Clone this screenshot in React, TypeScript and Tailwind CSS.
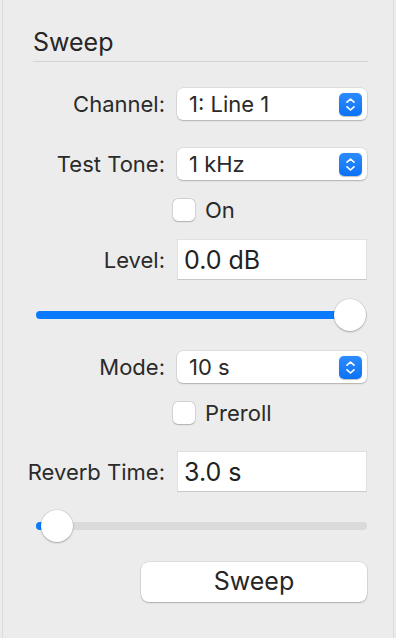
import React from "react"

const font = { fontFamily: "Inter, 'Liberation Sans', sans-serif" }

function Stepper() {
    return (
        <div className="flex h-[23px] w-[23px] flex-col items-center justify-center gap-[3px] rounded-[5px] bg-gradient-to-b from-[#2b8cff] to-[#0a72f5] shadow-[0_0.5px_1px_rgba(0,0,0,0.25)]">
            <svg width="9" height="5" viewBox="0 0 9 5" fill="none">
                <path d="M1 4.2 L4.5 1 L8 4.2" stroke="white" strokeWidth="1.6" strokeLinecap="round" strokeLinejoin="round" />
            </svg>
            <svg width="9" height="5" viewBox="0 0 9 5" fill="none">
                <path d="M1 0.8 L4.5 4 L8 0.8" stroke="white" strokeWidth="1.6" strokeLinecap="round" strokeLinejoin="round" />
            </svg>
        </div>
    )
}

function Label({ children }: { children: React.ReactNode }) {
    return (
        <div className="flex w-[132px] shrink-0 justify-end whitespace-nowrap text-[22px] leading-[28px] text-[#2a2a2a]">
            {children}
        </div>
    )
}

function SelectRow({ label, value, className }: { label: string; value: string; className?: string }) {
    return (
        <div className={`flex h-[32px] items-center gap-[12px] ${className ?? ""}`}>
            <Label>{label}</Label>
            <div className="flex h-[32px] w-[190px] items-center justify-between rounded-[6px] bg-white pl-[12px] pr-[5px] shadow-[0_0_0_0.5px_rgba(0,0,0,0.12),0_1px_1.5px_rgba(0,0,0,0.2)]">
                <span className="text-[22px] leading-[28px] text-[#2a2a2a]">{value}</span>
                <Stepper />
            </div>
        </div>
    )
}

function FieldRow({ label, value, className }: { label: string; value: string; className?: string }) {
    return (
        <div className={`flex h-[41px] items-center gap-[12px] ${className ?? ""}`}>
            <Label>{label}</Label>
            <div className="flex h-[41px] w-[190px] items-center border border-[#e0e0e0] border-b-[#c8c8c8] bg-white pl-[6px]">
                <span className="text-[25px] leading-[30px] text-[#222]">{value}</span>
            </div>
        </div>
    )
}

function CheckRow({ label, className }: { label: string; className?: string }) {
    return (
        <div className={`flex h-[22px] items-center pl-[140px] ${className ?? ""}`}>
            <div className="h-[22px] w-[22px] rounded-[5px] bg-white shadow-[0_0_0_0.5px_rgba(0,0,0,0.15),0_0.5px_1.5px_rgba(0,0,0,0.2)]" />
            <span className="ml-[10px] text-[22px] leading-[22px] text-[#2a2a2a]">{label}</span>
        </div>
    )
}

function Slider({ pct, className }: { pct: number; className?: string }) {
    return (
        <div className={`relative ml-[3px] h-[32px] w-[331px] ${className ?? ""}`}>
            <div className="absolute left-0 right-0 top-[12px] h-[8px] rounded-full bg-[#dadada]" />
            <div
                className="absolute left-0 top-[12px] h-[8px] rounded-full bg-[#0a7aff]"
                style={{ width: `${pct}%` }}
            />
            <div
                className="absolute top-0 h-[32px] w-[32px] rounded-full bg-white shadow-[0_0_0_0.5px_rgba(0,0,0,0.12),0_1px_2px_rgba(0,0,0,0.25)]"
                style={{ left: pct > 50 ? 298 : 5 }}
            />
        </div>
    )
}

export default function App() {
    return (
        <div className="h-[638px] w-[396px] bg-[#ececec] pl-[2px]" style={font}>
            <div className="h-full w-[392px] border-x border-[#dcdcdc] pl-[30px] pt-[27px]">
                <div className="w-[335px]">
                    <div className="text-[25px] leading-[30px] text-[#262626]">Sweep</div>
                    <div className="mt-[4px] h-px w-full bg-[#d4d4d4]" />

                    <SelectRow label="Channel:" value="1: Line 1" className="mt-[26px]" />
                    <SelectRow label="Test Tone:" value="1 kHz" className="mt-[28px]" />
                    <CheckRow label="On" className="mt-[19px]" />
                    <FieldRow label="Level:" value="0.0 dB" className="mt-[18px]" />
                    <Slider pct={95} className="mt-[19px]" />
                    <SelectRow label="Mode:" value="10 s" className="mt-[20px]" />
                    <CheckRow label="Preroll" className="mt-[19px]" />
                    <FieldRow label="Reverb Time:" value="3.0 s" className="mt-[27px]" />
                    <Slider pct={3} className="mt-[18px]" />

                    <div className="mt-[20px] flex justify-end pr-px">
                        <button className="h-[40px] w-[226px] rounded-[8px] bg-white text-[25px] text-[#262626] shadow-[0_0_0_0.5px_rgba(0,0,0,0.12),0_1px_1.5px_rgba(0,0,0,0.22)]">
                            Sweep
                        </button>
                    </div>
                </div>
            </div>
        </div>
    )
}
